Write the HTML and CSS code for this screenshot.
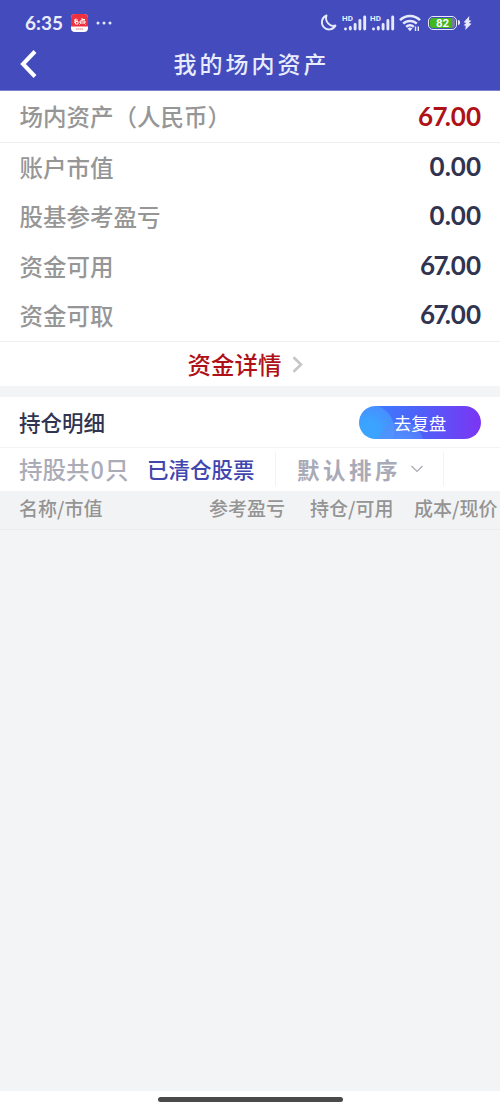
FILE: index.html
```html
<!DOCTYPE html>
<html lang="zh-CN">
<head>
    <meta charset="UTF-8">
    <meta name="viewport" content="width=device-width, initial-scale=1.0">
    <title>我的场内资产</title>
    <link rel="stylesheet" href="styles.css">
</head>
<body>
    <header class="header">
        <div class="status-bar">
            <span class="time">6:35</span>
            <svg class="app-icon" width="17" height="18" viewBox="0 0 17 18">
                <rect width="17" height="18" rx="4" fill="#fff"/>
                <path d="M0 12.500V4a4 4 0 0 1 4-4h9a4 4 0 0 1 4 4v8.500z" fill="#f0303c"/>
                <path d="M3 6h4M5 4.500L3.500 9M4.500 7.500h2.500v2.500h-2.500zM11 4v3M11 5.500h3M9 7h5v2H9zM8.500 10.500l1-1M14.500 10.500l-1-1" fill="none" stroke="#fff" stroke-width="1"/>
                <path d="M5 15h7" stroke="#c77" stroke-width="1" stroke-dasharray="1.500 .5"/>
            </svg>
            <svg class="dots" width="16" height="4" viewBox="0 0 16 4" fill="#e6e9fb">
                <circle cx="2" cy="2" r="1.500"/><circle cx="8" cy="2" r="1.500"/><circle cx="14" cy="2" r="1.500"/>
            </svg>
            <div class="status-icons">
                <svg class="moon" width="17" height="18" viewBox="0 0 17 18" fill="none" stroke="#e6e9fb" stroke-width="1.900" stroke-linejoin="round">
                    <path d="M6.500 1.500A7.200 7.200 0 1 0 15.500 11.500C10.500 13.500 4.500 8 6.500 1.500z"/>
                </svg>
                <div class="signal">
                    <span class="hd">HD</span>
                    <svg width="24" height="16" viewBox="0 0 24 16" stroke="#e6e9fb" stroke-width="2.900" stroke-linecap="round">
                        <path d="M2.500 14v.1M7.300 12.500v1.500M12.100 9.500v4.500M16.900 5.500v8.500M21.700 2v12"/>
                    </svg>
                </div>
                <div class="signal">
                    <span class="hd">HD</span>
                    <svg width="24" height="16" viewBox="0 0 24 16" stroke="#e6e9fb" stroke-width="2.900" stroke-linecap="round">
                        <path d="M2.500 14v.1M7.300 12.500v1.500M12.100 9.500v4.500M16.900 5.500v8.500M21.700 2v12"/>
                    </svg>
                </div>
                <svg class="wifi" width="22" height="18" viewBox="0 0 22 18" fill="none" stroke="#e6e9fb" stroke-width="2.500">
                    <path d="M1 6.200C6.500.6 15.500.6 21 6.200M4.200 9.700c3.800-3.700 9.800-3.700 13.600 0M7.200 12.800c2.200-2 5.400-2 7.600 0"/>
                    <path d="M11 17.200l-2.500-2.700q2.500-2 5 0z" fill="#e6e9fb" stroke="none"/>
                    <path d="M16.500 12.500v4.500M19.300 12.500v4.500" stroke-width="1.400"/>
                </svg>
                <div class="battery"><span class="battery-level">82</span></div>
                <svg class="bolt" width="9" height="14" viewBox="0 0 9 14" fill="#e6e9fb">
                    <path d="M6.300 0L.7 6.300 3.300 7 .5 9.200l2.200.6L2.300 14 8.500 7.700 5.800 7 8.400 4.800 6 4.200z"/>
                </svg>
            </div>
        </div>
        <div class="title-bar">
            <svg class="back" width="17" height="28" viewBox="0 0 17 28" fill="none" stroke="#fff" stroke-width="4">
                <path d="M15 1.500L3 14 15 26.500"/>
            </svg>
            <h1 class="title">我的场内资产</h1>
        </div>
    </header>

    <section class="assets">
        <div class="row total">
            <span>场内资产（人民币）</span>
            <span class="value"><span class="six">6</span><span class="seven">7</span>.00</span>
        </div>
        <div class="rows">
            <div class="row"><span>账户市值</span><span class="value">0.00</span></div>
            <div class="row"><span>股基参考盈亏</span><span class="value">0.00</span></div>
            <div class="row"><span>资金可用</span><span class="value"><span class="six">6</span><span class="seven">7</span>.00</span></div>
            <div class="row"><span>资金可取</span><span class="value"><span class="six">6</span><span class="seven">7</span>.00</span></div>
        </div>
        <div class="detail-link">
            <span>资金详情</span>
            <svg width="11" height="17" viewBox="0 0 11 17" fill="none" stroke="#c6c6c8" stroke-width="2.600">
                <path d="M1.500 1.200L9 8.500l-7.500 7.300"/>
            </svg>
        </div>
    </section>

    <section class="positions">
        <div class="positions-head">
            <h2>持仓明细</h2>
            <button class="review-btn">去复盘</button>
        </div>
        <div class="filters">
            <span class="count">持股共<span class="num">0</span>只</span>
            <span class="cleared">已清仓股票</span>
            <div class="sort">
                <span>默认排序</span>
                <svg width="12" height="8" viewBox="0 0 12 8" fill="none" stroke="#a9aab3" stroke-width="1.200">
                    <path d="M.5 1L6 6.500 11.500 1"/>
                </svg>
            </div>
        </div>
        <div class="table-head">
            <span>名称/市值</span>
            <span>参考盈亏</span>
            <span>持仓/可用</span>
            <span>成本/现价</span>
        </div>
    </section>

    <footer class="home-bar"><div class="home-indicator"></div></footer>
</body>
</html>
```
FILE: styles.css
```css
* {
    box-sizing: border-box;
}

body {
    margin: 0;
    height: 1111px;
    display: flex;
    flex-direction: column;
    overflow: hidden;
    background: #f3f4f6;
    font-family: "Noto Sans CJK SC", sans-serif;
    font-weight: 500;
    color: #303450;
    white-space: nowrap;
}

svg {
    display: block;
    flex-shrink: 0;
}

/* header */
.header {
    height: 91px;
    background: #434bbd;
    border-bottom: 1px solid #7c81d0;
    color: #e9ecfc;
}

.status-bar {
    display: flex;
    align-items: center;
    height: 38px;
    padding: 7px 28px 0 25px;
}

.time {
    width: 46px;
    font-family: Lato, sans-serif;
    font-size: 19px;
    font-weight: 700;
}

.app-icon {
    margin-right: 8px;
}

.status-icons {
    display: flex;
    align-items: center;
    margin-left: auto;
}

.moon {
    margin-right: 6px;
}

.signal {
    position: relative;
    width: 24px;
    margin-right: 4px;
}

.signal + .signal {
    margin-right: 3px;
}

.hd {
    position: absolute;
    top: -1px;
    left: -1px;
    font: 700 8px/9px Roboto, sans-serif;
}

.wifi {
    margin: 0 7px 0 1px;
}

.battery {
    position: relative;
    width: 29px;
    height: 14px;
    margin-right: 6px;
    padding: 1px;
    border: 1.500px solid #e6e9fb;
    border-radius: 5px;
}

.battery::after {
    content: "";
    position: absolute;
    right: -4px;
    top: 3px;
    width: 2px;
    height: 5px;
    border-radius: 0 2px 2px 0;
    background: #e6e9fb;
}

.battery-level {
    display: block;
    height: 10px;
    border-radius: 3px;
    background: linear-gradient(90deg, #43b51d 82%, #7579a5 82%);
    color: #fff;
    font: 700 11.500px/11px Roboto, sans-serif;
    text-align: center;
}

.title-bar {
    display: grid;
    grid-template-columns: 60px 1fr 60px;
    align-items: center;
    height: 52px;
}

.back {
    margin-left: 20px;
}

.title {
    margin: 0;
    padding: 0 0 2px 3px;
    font-size: 23px;
    font-weight: 500;
    letter-spacing: 3px;
    text-align: center;
}

/* assets */
.assets {
    height: 295px;
    background: #fff;
    color: #969696;
    font-size: 23.5px;
}

.row {
    display: flex;
    justify-content: space-between;
    align-items: center;
    height: 49.500px;
    padding: 0 19px 2px 19.500px;
}

.total {
    height: 52px;
    border-bottom: 1px solid #eeeeee;
}

.rows {
    height: 199px;
    border-bottom: 1px solid #efeff0;
}

.value {
    padding-bottom: 2px;
    font-family: Lato, sans-serif;
    font-size: 26px;
    font-weight: 700;
    color: #303450;
}

.six {
    letter-spacing: -1.500px;
}

.seven {
    letter-spacing: -4px;
}

.total .value,
.detail-link {
    color: #ae1117;
}

.total .value {
    padding-bottom: 0;
}

.total .six {
    letter-spacing: -0.500px;
}

.total .seven {
    letter-spacing: -3px;
}

.detail-link {
    display: flex;
    justify-content: center;
    align-items: center;
    gap: 10px;
    height: 44px;
    padding-right: 10px;
}

/* positions */
.positions {
    margin-top: 11px;
}

.positions-head {
    display: flex;
    justify-content: space-between;
    align-items: center;
    height: 51px;
    padding: 0 19px;
    background: #fff;
    border-bottom: 1px solid #f3f3f5;
}

h2 {
    margin: 0;
    padding-bottom: 2px;
    font-size: 21.500px;
    font-weight: 500;
}

.review-btn {
    width: 122px;
    height: 33px;
    padding: 0;
    border: 0;
    border-radius: 17px;
    background:
        radial-gradient(circle at 42px 38px, rgba(86, 156, 255, 0.8) 0, rgba(86, 140, 255, 0.55) 22px, transparent 23px),
        radial-gradient(circle at 10px 24px, #3ba4ff 8px, #478fff 25px, transparent 26px),
        linear-gradient(90deg, #3b82ff 5%, #4d60f8 50%, #7c35f3);
    color: #fff;
    font-family: inherit;
    font-size: 17.500px;
}

.filters {
    display: flex;
    align-items: center;
    height: 43px;
    padding: 0 0 1px 19px;
    background: #fff;
}

.count {
    width: 128px;
    color: #abacb7;
    font-size: 23.500px;
}

.num {
    margin: 0 1px;
}

.cleared {
    width: 128px;
    padding-bottom: 1px;
    color: #4146af;
    font-size: 21.500px;
}

.sort {
    display: flex;
    align-items: center;
    justify-content: space-between;
    width: 169px;
    height: 34px;
    padding: 0 20px 0 21px;
    border: solid #f3f3f5;
    border-width: 0 1px;
    color: #a9aab8;
    font-size: 22.500px;
    font-weight: 700;
    letter-spacing: 3.500px;
}

.table-head {
    display: grid;
    grid-template-columns: 190px 101px 104px 1fr;
    align-items: center;
    height: 39px;
    padding: 0 0 6px 19px;
    border-bottom: 1px solid #ececef;
    background: #f2f3f4;
    color: #949494;
    font-size: 19px;
}

/* bottom gesture bar */
.home-bar {
    height: 20px;
    margin-top: auto;
    padding-top: 6px;
    background: #fff;
}

.home-indicator {
    width: 185px;
    height: 5px;
    margin: 0 auto;
    border-radius: 3px;
    background: #4a4a4a;
}
```
